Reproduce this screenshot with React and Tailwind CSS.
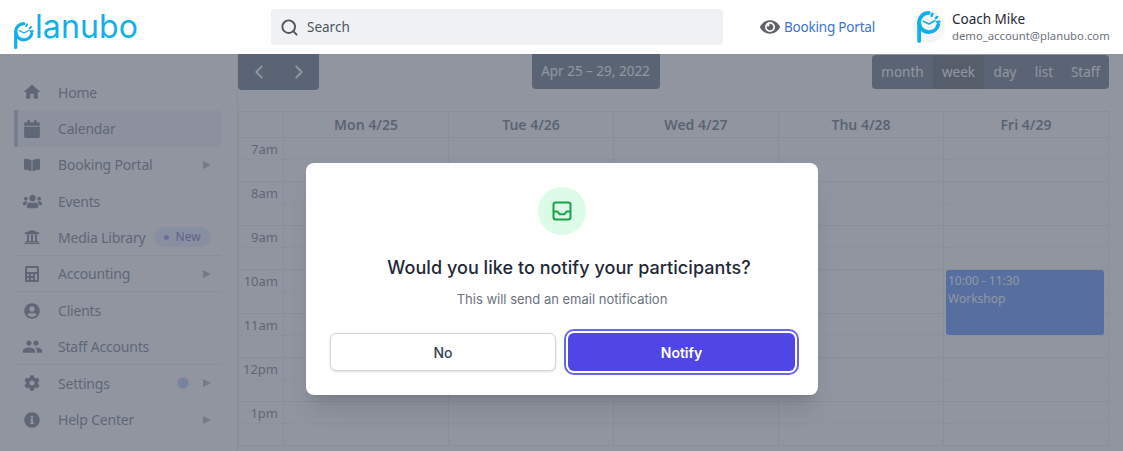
import React from "react";
import {
  FaCalendar, FaBookOpen, FaUniversity, FaCalculator, FaUsers,
  FaUserCircle, FaCog, FaInfoCircle, FaEye,
} from "react-icons/fa";
import { MdHome, MdPeople } from "react-icons/md";
import { ChevronLeft, ChevronRight, Search } from "lucide-react";

const nav = [
  { label: "Home", Icon: MdHome, size: "text-[20px]" },
  { label: "Calendar", Icon: FaCalendar, size: "text-[18px]", active: true },
  { label: "Booking Portal", Icon: FaBookOpen, size: "text-[16px]", arrow: true },
  { label: "Events", Icon: FaUsers, size: "text-[19px]" },
  { label: "Media Library", Icon: FaUniversity, size: "text-[16px]", badge: true, divider: true },
  { label: "Accounting", Icon: FaCalculator, size: "text-[16px]", arrow: true, divider: true },
  { label: "Clients", Icon: FaUserCircle, size: "text-[16px]" },
  { label: "Staff Accounts", Icon: MdPeople, size: "text-[21px]", divider: true },
  { label: "Settings", Icon: FaCog, size: "text-[16px]", arrow: true, dot: true },
  { label: "Help Center", Icon: FaInfoCircle, size: "text-[16px]", arrow: true },
];

const days = ["Mon 4/25", "Tue 4/26", "Wed 4/27", "Thu 4/28", "Fri 4/29"];
const hours = ["7am", "8am", "9am", "10am", "11am", "12pm", "1pm"];

function PMark({ className }) {
  return (
    <svg viewBox="0 0 20 27" className={className} fill="none">
      <path d="M1.7 25.4V9.6A8.1 8.1 0 0 1 9.8 1.6" stroke="#12b0ea" strokeWidth="3.2" strokeLinecap="round" />
      <path d="M1.7 10A8.1 8.1 0 0 0 9.8 17.8A8.1 8.1 0 0 0 17.8 11.5" stroke="#12b0ea" strokeWidth="3.2" strokeLinecap="round" />
      <path d="M5.2 8.6L10 11L15 8.2" stroke="#12b0ea" strokeWidth="1.3" strokeLinecap="round" strokeLinejoin="round" />
      <path d="M13 2.4L12.2 4.2M17 5L15.6 6.2M18.8 9L16.8 9.2" stroke="#12b0ea" strokeWidth="2" strokeLinecap="round" />
    </svg>
  );
}

function Sidebar() {
  return (
    <aside className="w-[238px] shrink-0 border-r border-[#dfe3e8] pt-[20px] pl-[14px] pr-[16px]">
      {nav.map(({ label, Icon, size, active, arrow, badge, dot, divider }) => (
        <div
          key={label}
          className={`flex h-[36.4px] items-center text-[14px] tracking-[-0.2px] text-[#3c4658] ${
            active ? "bg-[#eef0f3] border-l-4 border-[#8fa6c8] pl-[6px]" : "pl-[10px]"
          } ${divider ? "border-b border-[#dfe3e8]" : ""}`}
        >
          <span className={`flex w-[16px] justify-center ${size}`}>
            <Icon className="shrink-0" />
          </span>
          <span className="ml-[18px]">{label}</span>
          {badge && (
            <span className="ml-[8px] flex h-[20px] w-[57px] items-center gap-[7px] rounded-full bg-[#e0e7ff] pl-[10px] text-[12px] tracking-normal text-[#3730a3]">
              <span className="h-[5px] w-[5px] rounded-full bg-[#6366f1]" />
              New
            </span>
          )}
          {dot && <span className="ml-auto mr-[15px] h-[10px] w-[10px] rounded-full bg-[#a5b4fc] ring-1 ring-[#c7d2fe]" />}
          {arrow && (
            <span className={`${dot ? "" : "ml-auto"} mr-[10px] h-0 w-0 border-y-[4.5px] border-l-[8px] border-y-transparent border-l-[#8a93a3]`} />
          )}
        </div>
      ))}
    </aside>
  );
}

function Calendar() {
  return (
    <main className="flex-1 pr-[14px]">
      <div className="flex h-[57px] items-start justify-between text-[13.5px] text-white">
        <div className="flex h-[36px] w-[81px] items-center rounded-b-[4px] bg-[#2c3e50]">
          <span className="flex w-[41px] justify-center"><ChevronLeft size={22} strokeWidth={2} /></span>
          <span className="flex w-[40px] justify-center"><ChevronRight size={22} strokeWidth={2} /></span>
        </div>
        <div className="flex h-[35px] w-[128px] items-center justify-center rounded-b-[4px] bg-[#2c3e50]">
          Apr 25 – 29, 2022
        </div>
        <div className="mt-[1px] flex h-[34px] items-stretch overflow-hidden rounded-[4px] bg-[#2c3e50]">
          <span className="flex w-[61px] items-center justify-center">month</span>
          <span className="flex w-[51px] items-center justify-center bg-[#1a252f]">week</span>
          <span className="flex w-[42px] items-center justify-center">day</span>
          <span className="flex w-[36px] items-center justify-center">list</span>
          <span className="flex w-[47px] items-center justify-center">Staff</span>
        </div>
      </div>
      <div className="w-[871px] border-l border-t border-[#dde1e6]">
        <div className="grid h-[26px] grid-cols-[45px_repeat(5,165px)] border-b border-[#dde1e6] text-[14px] font-semibold text-[#2f3a4a]">
          <div className="border-r border-[#dde1e6]" />
          {days.map((d) => (
            <div key={d} className="flex items-center justify-center border-r border-[#dde1e6]">{d}</div>
          ))}
        </div>
        {hours.map((h) => (
          <div key={h} className="grid h-[44px] grid-cols-[45px_repeat(5,165px)] border-b border-[#dde1e6] text-[13px]">
            <div className="border-r border-[#dde1e6] text-right text-[#3c4658]">
              <div className="h-[22px] border-b border-dotted border-[#dde1e6] pr-[5px] pt-[2px]">{h}</div>
            </div>
            {days.map((d) => (
              <div key={d} className="border-r border-[#dde1e6]">
                <div className="h-[22px] border-b border-dotted border-[#dde1e6]" />
              </div>
            ))}
          </div>
        ))}
      </div>
    </main>
  );
}

function Modal() {
  return (
    <div className="absolute left-[306px] top-[163px] z-40 h-[232px] w-[512px] rounded-[8px] bg-white p-[24px] shadow-xl font-['Inter',sans-serif]">
      <div className="mx-auto flex h-[48px] w-[48px] items-center justify-center rounded-full bg-[#dcfce7]">
        <svg viewBox="0 0 20 20" className="h-[20px] w-[20px]" fill="none" stroke="#16a34a" strokeWidth="2" strokeLinejoin="round" strokeLinecap="round">
          <rect x="1.5" y="1.5" width="17" height="17" rx="2.2" />
          <path d="M2 10.5H5.5L7.5 13.2H12.5L14.5 10.5H18" />
        </svg>
      </div>
      <h3 className="mt-[21px] pl-[14px] text-center text-[18px] font-medium leading-[24px] tracking-[0.05px] text-[#1f2937]">
        Would you like to notify your participants?
      </h3>
      <p className="mt-[9px] text-center text-[13px] leading-[20px] text-[#6b7280]">
        This will send an email notification
      </p>
      <div className="mt-[24px] grid grid-cols-[226px_227px] gap-[12px]">
        <button className="h-[38px] rounded-[6px] border border-[#d1d5db] bg-white text-[14px] font-medium text-[#374151] shadow-sm">
          No
        </button>
        <button className="h-[38px] rounded-[6px] bg-[#4f46e5] text-[14px] font-semibold text-white ring-2 ring-[#6366f1] ring-offset-2">
          Notify
        </button>
      </div>
    </div>
  );
}

export default function App() {
  return (
    <div className="relative h-[451px] w-[1123px] overflow-hidden bg-white font-['Noto_Sans',sans-serif]">
      <header className="relative z-30 flex h-[54px] items-center bg-white">
        <div className="ml-[14px] flex w-[257px] shrink-0 items-start">
          <PMark className="mt-[17px] h-[27px] w-[20px]" />
          <span className="ml-[1px] mt-[2px] font-['Inter',sans-serif] text-[32px] font-normal leading-[40px] tracking-[0.1px] text-[#12b0ea]">lanubo</span>
        </div>
        <div className="flex h-[36px] w-[452px] shrink-0 items-center rounded-[4px] bg-[#f0f1f3] pl-[9px] text-[13.5px] text-[#4b5563]">
          <Search size={19} strokeWidth={2.4} className="text-[#555]" />
          <span className="ml-[8px]">Search</span>
        </div>
        <div className="ml-[37px] flex shrink-0 items-center whitespace-nowrap text-[13.5px] tracking-[-0.2px] text-[#3b74d4]">
          <FaEye className="text-[20px] text-[#5f6368]" />
          <span className="ml-[4px]">Booking Portal</span>
        </div>
        <div className="ml-[38px] flex shrink-0 items-center">
          <div className="flex h-[32px] w-[32px] items-center justify-center rounded-full bg-[#f5f5f5]">
            <PMark className="h-[32px] w-[24px]" />
          </div>
          <div className="ml-[7px] whitespace-nowrap">
            <div className="text-[13.5px] leading-[18px] text-[#1f2937]">Coach Mike</div>
            <div className="text-[11.3px] leading-[16px] text-[#6b7280]">demo_account@planubo.com</div>
          </div>
        </div>
      </header>
      <div className="flex h-[397px]">
        <Sidebar />
        <Calendar />
      </div>
      <div className="absolute left-[946px] top-[270px] z-0 h-[65px] w-[158px] rounded-[3px] bg-[#1864ff] p-[2px] text-[12px] leading-[18px] text-white">
        <div>10:00 - 11:30</div>
        <div>Workshop</div>
      </div>
      <div className="absolute inset-x-0 bottom-0 top-[54px] z-10 bg-[#6b7280]/75" />
      <Modal />
    </div>
  );
}
